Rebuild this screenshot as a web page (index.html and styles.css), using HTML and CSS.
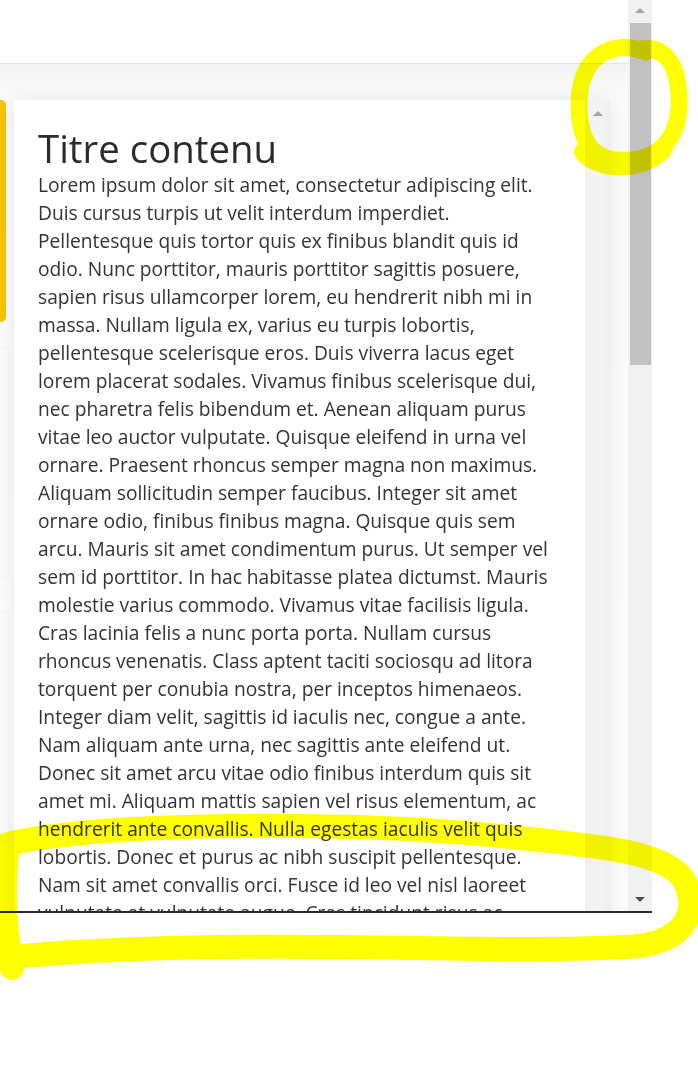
FILE: index.html
```html
<!DOCTYPE html>
<html lang="fr">
<head>
<meta charset="utf-8">
<title>Titre contenu</title>
<link rel="stylesheet" href="styles.css">
</head>
<body>
<div class="screen">
  <div class="viewport">
    <div class="page">
      <header class="topbar"></header>
      <main class="main">
        <aside class="side">
          <div class="tab"></div>
          <div class="side-panel"></div>
          <div class="side-panel"></div>
        </aside>
        <section class="card-wrap">
          <article class="card">
            <h1 class="title">Titre contenu</h1>
            <p class="body">Lorem ipsum dolor sit amet, consectetur adipiscing elit.<br>
Duis cursus turpis ut velit interdum imperdiet.<br>
Pellentesque quis tortor quis ex finibus blandit quis id<br>
odio. Nunc porttitor, mauris porttitor sagittis posuere,<br>
sapien risus ullamcorper lorem, eu hendrerit nibh mi in<br>
massa. Nullam ligula ex, varius eu turpis lobortis,<br>
pellentesque scelerisque eros. Duis viverra lacus eget<br>
lorem placerat sodales. Vivamus finibus scelerisque dui,<br>
nec pharetra felis bibendum et. Aenean aliquam purus<br>
vitae leo auctor vulputate. Quisque eleifend in urna vel<br>
ornare. Praesent rhoncus semper magna non maximus.<br>
Aliquam sollicitudin semper faucibus. Integer sit amet<br>
ornare odio, finibus finibus magna. Quisque quis sem<br>
arcu. Mauris sit amet condimentum purus. Ut semper vel<br>
sem id porttitor. In hac habitasse platea dictumst. Mauris<br>
molestie varius commodo. Vivamus vitae facilisis ligula.<br>
Cras lacinia felis a nunc porta porta. Nullam cursus<br>
rhoncus venenatis. Class aptent taciti sociosqu ad litora<br>
torquent per conubia nostra, per inceptos himenaeos.<br>
Integer diam velit, sagittis id iaculis nec, congue a ante.<br>
Nam aliquam ante urna, nec sagittis ante eleifend ut.<br>
Donec sit amet arcu vitae odio finibus interdum quis sit<br>
amet mi. Aliquam mattis sapien vel risus elementum, ac<br>
hendrerit ante convallis. Nulla egestas iaculis velit quis<br>
lobortis. Donec et purus ac nibh suscipit pellentesque.<br>
Nam sit amet convallis orci. Fusce id leo vel nisl laoreet<br>
vulputate at vulputate augue. Cras tincidunt risus ac</p>
          </article>
          <div class="inner-scroll">
            <span class="arrow up"></span>
          </div>
        </section>
      </main>
    </div>
    <div class="outer-scroll">
      <span class="arrow up"></span>
      <div class="thumb"></div>
      <div class="track-fill"></div>
      <span class="arrow down"></span>
    </div>
  </div>
  <div class="bottom-rule"></div>

  <svg class="marker" width="698" height="1077" viewBox="0 0 698 1077" aria-hidden="true">
    <path d="M 646 52 C 610 38, 579 58, 579 105 C 579 148, 598 163, 632 160 C 668 156, 681 128, 679 95 C 677 62, 664 46, 641 49"
          fill="none" stroke="#ffff00" stroke-width="17" stroke-linecap="round"/>
    <path d="M 584 152 C 600 170, 640 170, 662 150" fill="none" stroke="#ffff00" stroke-width="20" stroke-linecap="round"/>
    <path d="M 12 968 C 6 935, 2 890, 8 844 C 100 822, 350 820, 520 838 C 600 846, 665 852, 684 880 C 698 908, 690 938, 640 946 C 500 956, 250 936, 22 956"
          fill="none" stroke="#ffff00" stroke-width="24" stroke-linecap="round" stroke-linejoin="round"/>
  </svg>
</div>
</body>
</html>
```

FILE: styles.css
```css
* { box-sizing: border-box; }

html, body {
  margin: 0;
  padding: 0;
  background: #ffffff;
}

.screen {
  position: relative;
  width: 698px;
  height: 1077px;
  overflow: hidden;
  font-family: "Open Sans", "Noto Sans", "Liberation Sans", sans-serif;
  color: #2f2f2f;
}

.viewport {
  display: flex;
  width: 652px;
  height: 911px;
}

.page {
  flex: 1;
  display: flex;
  flex-direction: column;
  overflow: hidden;
  min-width: 0;
}

.topbar {
  height: 64px;
  flex: none;
  background: #ffffff;
  border-bottom: 1px solid #e4e4e4;
}

.main {
  flex: 1;
  display: flex;
  align-items: flex-start;
  padding-top: 36px;
  background: linear-gradient(#f4f4f4 0, #fbfbfb 36px, #fcfcfc 100%);
  min-height: 0;
  overflow: hidden;
}

.side {
  width: 8px;
  flex: none;
  display: flex;
  flex-direction: column;
}

.tab {
  width: 6px;
  height: 222px;
  background: #f8c200;
  border-radius: 0 5px 5px 0;
}

.side-panel {
  height: 226px;
  margin-top: 28px;
  background: #fbfbfb;
  box-shadow: 0 0 6px rgba(0, 0, 0, 0.06);
}

.side-panel + .side-panel {
  margin-top: 38px;
}

.card-wrap {
  margin-left: 6px;
  width: 596px;
  display: flex;
  align-items: stretch;
  height: 900px;
  box-shadow: 0 0 18px rgba(0, 0, 0, 0.08);
}

.card {
  flex: 1;
  background: #ffffff;
  padding: 26px 0 0 24px;
  overflow: hidden;
}

.title {
  margin: 0 0 1px;
  font-size: 38.4px;
  line-height: 44px;
  font-weight: 400;
  color: #2b2b2b;
}

.body {
  margin: 0;
  font-size: 19.2px;
  line-height: 28px;
  white-space: nowrap;
  color: #333333;
}

.inner-scroll {
  width: 25px;
  flex: none;
  background: linear-gradient(90deg, #f1f1f1 0, #f3f3f3 60%, #efefef 100%);
  display: flex;
  justify-content: center;
  padding-top: 11px;
}

.outer-scroll {
  width: 24px;
  flex: none;
  background: #f1f1f1;
  display: flex;
  flex-direction: column;
  align-items: center;
  padding: 8px 0 9px;
}

.thumb {
  margin-top: 10px;
  width: 21px;
  height: 342px;
  background: #c1c1c1;
}

.track-fill {
  flex: 1;
}

.arrow {
  display: block;
  width: 0;
  height: 0;
  border-left: 5px solid transparent;
  border-right: 5px solid transparent;
}

.arrow.up { border-bottom: 5px solid #a3a3a3; }
.arrow.down { border-top: 5px solid #505050; }

.bottom-rule {
  width: 652px;
  height: 2px;
  background: #242a33;
}

.marker {
  position: absolute;
  left: 0;
  top: 0;
  pointer-events: none;
  mix-blend-mode: multiply;
}
```
